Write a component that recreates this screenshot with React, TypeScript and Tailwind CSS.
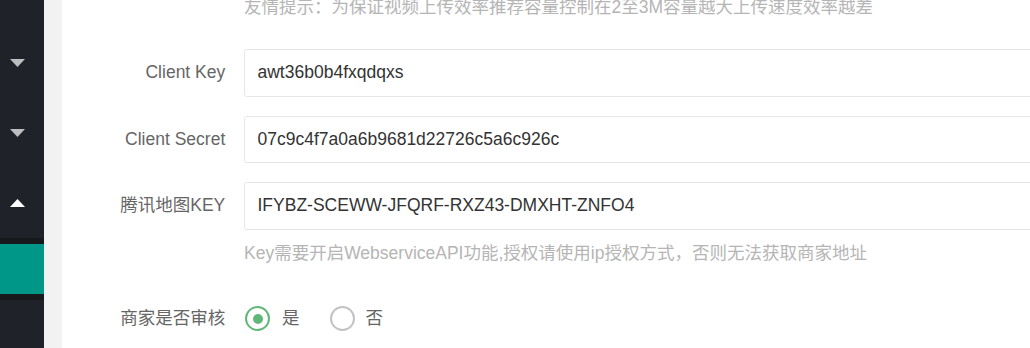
import React from "react";

const font = { fontFamily: '"Liberation Sans", Arial, "Noto Sans CJK SC", sans-serif' };

function Caret({ up, white }: { up?: boolean; white?: boolean }) {
  return (
    <svg width="15" height="8" viewBox="0 0 15 8" className="block">
      {up ? (
        <polygon points="0,8 15,8 7.5,0" fill={white ? "#ffffff" : "#bcbdbf"} />
      ) : (
        <polygon points="0,0 15,0 7.5,8" fill={white ? "#ffffff" : "#bcbdbf"} />
      )}
    </svg>
  );
}

function Row({ label, value, className = "" }: { label: string; value: string; className?: string }) {
  return (
    <div className={`flex h-[47.5px] ${className}`}>
      <div className="w-[137.5px] shrink-0 pr-[18.75px] text-right leading-[47.5px] text-[#666666]">{label}</div>
      <div className="flex-1 -mr-[20px] h-[47.5px] border border-[#e6e6e6] rounded-[2.5px] pl-[12.5px] leading-[45.5px] text-[#333333]">
        {value}
      </div>
    </div>
  );
}

export default function App() {
  return (
    <div className="flex h-[348px] w-[1030px] overflow-hidden text-[17.5px]" style={font}>
      <aside className="w-[44px] shrink-0 bg-[#20222a] flex flex-col">
        <div className="h-[28px]" />
        <div className="h-[70px] flex items-center pl-[10px]">
          <Caret />
        </div>
        <div className="h-[70px] flex items-center pl-[10px]">
          <Caret />
        </div>
        <div className="h-[70px] flex items-center pl-[10px]">
          <Caret up white />
        </div>
        <div className="bg-[#18191d] py-[6px]">
          <div className="h-[50px] bg-[#009688]" />
        </div>
        <div className="flex-1" />
      </aside>
      <div className="w-[18px] shrink-0 bg-[#f2f2f2]" />
      <main className="flex-1 bg-white pl-[44.5px] overflow-hidden">
        <div className="ml-[137.5px] h-[17px] leading-[15px] whitespace-nowrap text-[#b5b5b5]">
          友情提示：为保证视频上传效率推荐容量控制在2至3M容量越大上传速度效率越差
        </div>
        <Row className="mt-[32.3px] mb-[19px]" label="Client Key" value="awt36b0b4fxqdqxs" />
        <Row className="mb-[19px]" label="Client Secret" value="07c9c4f7a0a6b9681d22726c5a6c926c" />
        <Row label="腾讯地图KEY" value="IFYBZ-SCEWW-JFQRF-RXZ43-DMXHT-ZNFO4" />
        <div className="ml-[137.5px] mt-[13px] h-[20px] leading-[20px] whitespace-nowrap text-[#b5b5b5]">
          Key需要开启WebserviceAPI功能,授权请使用ip授权方式，否则无法获取商家地址
        </div>
        <div className="mt-[32px] flex h-[47.5px] items-center">
          <div className="w-[137.5px] shrink-0 pr-[18.75px] text-right text-[#666666]">商家是否审核</div>
          <div className="flex items-center">
            <span className="ml-[1px] flex h-[25px] w-[25px] items-center justify-center rounded-full border-2 border-[#5fb878]">
              <span className="h-[10px] w-[10px] rounded-full bg-[#5fb878]" />
            </span>
            <span className="ml-[12px] text-[#666666]">是</span>
            <span className="ml-[30px] h-[25px] w-[25px] rounded-full border-2 border-[#c2c2c2]" />
            <span className="ml-[11px] text-[#666666]">否</span>
          </div>
        </div>
      </main>
    </div>
  );
}
